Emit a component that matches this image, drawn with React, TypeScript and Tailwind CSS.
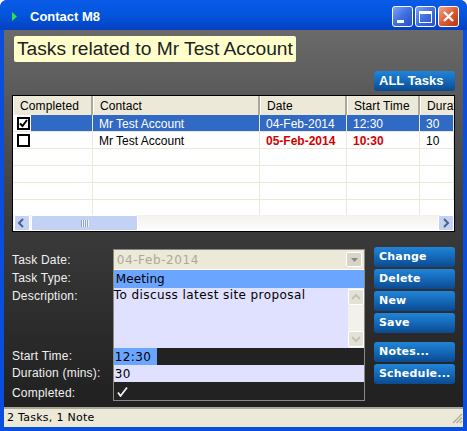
import React from "react";

const UI = { fontFamily: '"Liberation Sans", Arial, sans-serif' };
const VERDANA = { fontFamily: '"DejaVu Sans", Verdana, sans-serif' };

const COLS = [
  { label: "Completed", w: "w-[80px]" },
  { label: "Contact", w: "w-[167px]" },
  { label: "Date", w: "w-[87px]" },
  { label: "Start Time", w: "w-[73px]" },
  { label: "Duration", w: "w-[34px]" },
];

const LABELS = [
  { text: "Task Date:", h: "h-[18px]" },
  { text: "Task Type:", h: "h-[18px]" },
  { text: "Description:", h: "h-[60px]" },
  { text: "Start Time:", h: "h-[17px]" },
  { text: "Duration (mins):", h: "h-[20px]" },
  { text: "Completed:", h: "h-[18px]" },
];

function TitleButton({ kind }: { kind: "min" | "max" | "close" }) {
  const bg =
    kind === "close"
      ? "bg-gradient-to-br from-[#f0a58c] via-[#de5a33] to-[#b9340f]"
      : "bg-gradient-to-br from-[#7fa3f2] via-[#3e6fe0] to-[#2a4fc8]";
  return (
    <div className={`flex h-[21px] w-[21px] items-center justify-center rounded-[3px] border border-white ${bg}`}>
      {kind === "min" && <div className="mt-[9px] mr-[5px] h-[3px] w-[7px] bg-white" />}
      {kind === "max" && <div className="h-[12px] w-[13px] border border-t-[3px] border-white" />}
      {kind === "close" && (
        <svg width="13" height="13" viewBox="0 0 13 13">
          <path d="M2 2l9 9M11 2l-9 9" stroke="#fff" strokeWidth="2.4" />
        </svg>
      )}
    </div>
  );
}

function BlueButton({ label }: { label: string }) {
  return (
    <div
      style={VERDANA}
      className="flex h-[20px] w-[81px] items-center whitespace-nowrap rounded-[3px] bg-gradient-to-b from-[#2185d8] via-[#1468b8] to-[#0b4a90] pl-[5px] text-[11px] font-bold tracking-[0.2px] text-white"
    >
      {label}
    </div>
  );
}

function CheckBox({ checked }: { checked?: boolean }) {
  return (
    <div className="flex h-[13px] w-[13px] items-center justify-center border-2 border-black bg-white">
      {checked && (
        <svg width="9" height="9" viewBox="0 0 9 9">
          <path d="M1 4.5l2.5 2.5L8 1" fill="none" stroke="#000" strokeWidth="2" />
        </svg>
      )}
    </div>
  );
}

function Row({ selected, cells, overdue }: { selected?: boolean; cells: string[]; overdue?: boolean }) {
  return (
    <div className="flex h-[17px] border-b border-[#ece9d8] text-[12px] text-black">
      <div className="flex w-[80px] items-center border-r border-[#ece9d8]">
        <div className="ml-[4px]">
          {cells.length > 0 && <CheckBox checked={selected} />}
        </div>
        {selected && <div className="ml-[1px] h-full flex-1 bg-[#316ac5]" />}
      </div>
      {[COLS[1], COLS[2], COLS[3], COLS[4]].map((c, i) => {
        const red = overdue && (i === 1 || i === 2);
        return (
          <div
            key={c.label}
            className={`flex ${c.w} items-center border-r border-[#ece9d8] pl-[6px] pt-[2px] ${selected ? "bg-[#316ac5] text-white" : ""} ${red ? "font-bold text-[#d40000]" : ""}`}
          >
            {cells[i]}
          </div>
        );
      })}
    </div>
  );
}

function ScrollArrow({ dir, pale, className = "" }: { dir: "left" | "right" | "up" | "down"; pale?: boolean; className?: string }) {
  const d = {
    left: "M7 2L3 6l4 4",
    right: "M4 2l4 4-4 4",
    up: "M2 8l4-4 4 4",
    down: "M2 4l4 4 4-4",
  }[dir];
  return (
    <div className={`flex items-center justify-center rounded-[2px] border border-white ${pale ? "bg-[#e4e2d6]" : "bg-[#c3d2f4]"} ${className}`}>
      <svg width="12" height="12" viewBox="0 0 12 12">
        <path d={d} fill="none" stroke={pale ? "#c4c2b4" : "#4d6185"} strokeWidth="2" />
      </svg>
    </div>
  );
}

export default function App() {
  return (
    <div style={UI} className="flex h-[431px] w-[467px] flex-col overflow-hidden rounded-t-[7px] bg-[#0a4ee0]">
      {/* Title bar */}
      <div className="flex h-[30px] shrink-0 items-center bg-gradient-to-b from-[#0a5be8] via-[#0255dc] to-[#0640c0] pl-[12px] pr-[8px] pt-[3px]">
        <svg width="5" height="9" viewBox="0 0 5 9">
          <path d="M0 0l5 4.5L0 9z" fill="#2ee04a" />
        </svg>
        <span className="ml-[13px] text-[13px] font-bold text-white">Contact M8</span>
        <div className="ml-auto flex gap-[2px]">
          <TitleButton kind="min" />
          <TitleButton kind="max" />
          <TitleButton kind="close" />
        </div>
      </div>

      {/* Client area */}
      <div className="mx-[4px] mb-[4px] flex min-h-0 flex-1 flex-col">
        <div className="flex flex-1 flex-col bg-gradient-to-b from-[#6a6a6a] via-[#3c3c3c] to-[#202020] px-[8px] pt-[6px]">
          <div className="ml-[2px] flex h-[26px] w-[282px] items-center whitespace-nowrap rounded-[2px] bg-[#ffffcc] pl-[3px] text-[19.2px] leading-none text-[#222]">
            Tasks related to Mr Test Account
          </div>
          <div className="mt-[9px] flex justify-end">
            <div className="flex h-[20px] w-[81px] items-center rounded-[3px] bg-gradient-to-b from-[#2185d8] via-[#1468b8] to-[#0b4a90] pl-[5px] text-[13px] font-bold text-white">
              ALL Tasks
            </div>
          </div>

          {/* Task grid */}
          <div className="mt-[4px] h-[137px] w-[443px] border border-black bg-white">
            <div className="flex h-[19px] bg-[#ece9d8] text-[12px] tracking-[0.1px] text-black">
              {COLS.map((c, i) => (
                <div
                  key={c.label}
                  className={`flex ${c.w} items-center overflow-hidden whitespace-nowrap border-l border-l-white pl-[6px] ${i < 4 ? "border-r-2 border-r-[#aca899]" : ""}`}
                >
                  {c.label}
                </div>
              ))}
            </div>
            <Row selected cells={["Mr Test Account", "04-Feb-2014", "12:30", "30"]} />
            <Row overdue cells={["Mr Test Account", "05-Feb-2014", "10:30", "10"]} />
            <Row cells={[]} />
            <Row cells={[]} />
            <Row cells={[]} />
            <div className="flex h-[15px] text-[12px]">
              <div className="w-[80px] border-r border-[#ece9d8]" />
              <div className="w-[167px] border-r border-[#ece9d8]" />
              <div className="w-[87px] border-r border-[#ece9d8]" />
              <div className="w-[73px] border-r border-[#ece9d8]" />
            </div>
            <div className="flex h-[16px] items-stretch bg-gradient-to-b from-[#f3f1ec] to-[#fefefe] pl-[1px]">
              <ScrollArrow dir="left" className="w-[16px]" />
              <div className="ml-[1px] flex w-[107px] items-center justify-center rounded-[2px] border border-white bg-[#c3d2f4]">
                <div className="h-[7px] w-[8px] bg-[repeating-linear-gradient(90deg,#8fa5d5_0_1px,#eef2fc_1px_2px)]" />
              </div>
              <ScrollArrow dir="right" className="ml-auto w-[16px]" />
            </div>
          </div>

          {/* Task form */}
          <div className="mt-[17px] flex">
            <div className="w-[101px] pt-[1px] text-[12px] tracking-[0.2px] text-[#f0f0f0]">
              {LABELS.map((l) => (
                <div key={l.text} className={`flex ${l.h} items-start whitespace-nowrap pt-[1px]`}>
                  {l.text}
                </div>
              ))}
            </div>
            <div style={VERDANA} className="h-[152px] w-[253px] border border-[#8a8a80] text-[12px] leading-[18px] text-black">
              <div className="flex h-[20px] items-center justify-between border-b border-white bg-[#ece9d8] pl-[3px] pr-[2px] tracking-[0.6px] text-[#aca899]">
                04-Feb-2014
                <div className="flex h-[15px] w-[16px] items-center justify-center rounded-[2px] border border-white bg-[#d8d5c8]">
                  <svg width="9" height="6" viewBox="0 0 9 6">
                    <path d="M1 1h7L4.5 5z" fill="#8a8a80" />
                  </svg>
                </div>
              </div>
              <div className="h-[18px] bg-[#6aa5ff] pl-[2px] tracking-[0.1px]">Meeting</div>
              <div className="flex h-[60px] bg-[#e0e0ff]">
                <div className="flex-1 whitespace-nowrap leading-[15px] tracking-[0.42px]">To discuss latest site proposal</div>
                <div className="flex w-[16px] flex-col justify-between bg-[#f3f1ec] py-[1px]">
                  <ScrollArrow pale dir="up" className="h-[16px]" />
                  <ScrollArrow pale dir="down" className="h-[16px]" />
                </div>
              </div>
              <div className="h-[17px] bg-[#222]">
                <div className="h-full w-[43px] bg-[#6aa5ff] pl-[1px] tracking-[0.4px]">12:30</div>
              </div>
              <div className="h-[17px] bg-[#e0e0ff] pl-[1px] tracking-[0.4px]">30</div>
              <div className="flex h-[18px] items-center bg-[#222] pl-[3px]">
                <svg width="11" height="11" viewBox="0 0 11 11">
                  <path d="M1 6.5L3.5 10 10 1.5" fill="none" stroke="#eee" strokeWidth="1.8" />
                </svg>
              </div>
            </div>
            <div className="ml-[9px] -mt-[2px] flex flex-col">
              <div className="flex flex-col gap-[2px]">
                <BlueButton label="Change" />
                <BlueButton label="Delete" />
                <BlueButton label="New" />
                <BlueButton label="Save" />
              </div>
              <div className="mt-[9px] flex flex-col gap-[2px]">
                <BlueButton label="Notes..." />
                <BlueButton label="Schedule..." />
              </div>
            </div>
          </div>
        </div>

        {/* Status bar */}
        <div style={VERDANA} className="flex h-[20px] shrink-0 items-center border-t-2 border-t-[#aca899] bg-[#ece9d8] pl-[3px] text-[11px] tracking-[0.27px] text-black">
          2 Tasks, 1 Note
          <svg className="ml-auto" width="12" height="12" viewBox="0 0 12 12">
            <path d="M11 2L2 11M11 5.5L5.5 11M11 9L9 11" stroke="#aca899" strokeWidth="1.2" />
          </svg>
        </div>
      </div>
    </div>
  );
}
